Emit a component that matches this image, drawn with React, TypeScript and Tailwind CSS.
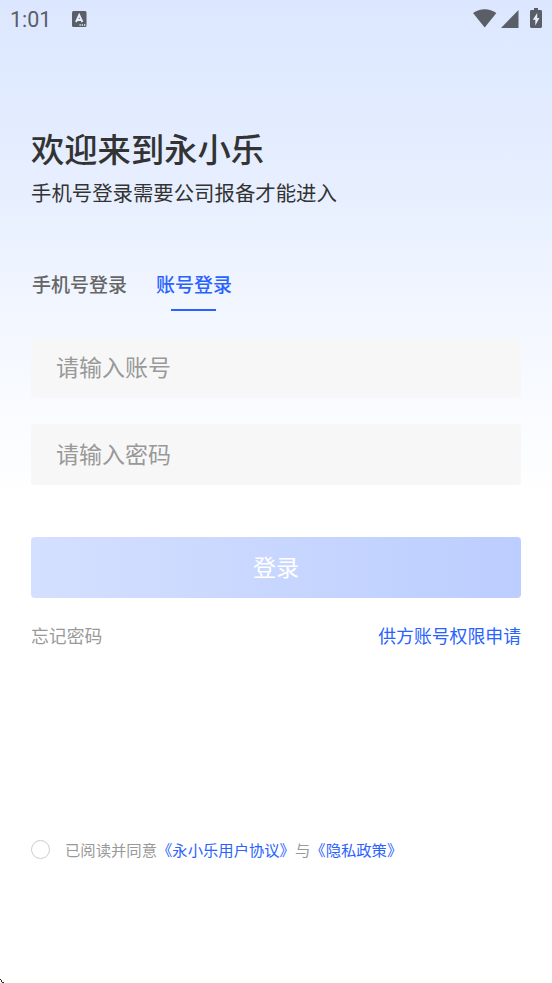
import React, { useState } from 'react';

type LoginMode = 'phone' | 'account';

const TABS: { id: LoginMode; label: string }[] = [
  { id: 'phone', label: '手机号登录' },
  { id: 'account', label: '账号登录' },
];

function StatusBar() {
  return (
    <header className="flex h-[38px] items-center pl-[10px] text-[#5a5e66]">
      <span className="w-[62px] pt-[2px] font-['Roboto',sans-serif] text-[21.5px] leading-[36px]">1:01</span>
      <svg width="15" height="16" viewBox="0 0 15 16" className="-mt-px">
        <rect x="0" y="0" width="14.5" height="16" rx="1.5" fill="currentColor" />
        <path d="M4 11 7.2 4 10.4 11M5.2 9H9.3" fill="none" stroke="#e6eeff" strokeWidth="1.9" />
        <path d="M7.5 14h1.3M9.7 14H11M12 14h1.3" stroke="#e6eeff" strokeWidth="1.3" />
      </svg>
      <div className="ml-auto flex items-center pr-[10px]">
        <svg width="24" height="19" viewBox="0 0 24 19" fill="currentColor" className="-mt-px">
          <path d="M0 4.1C6.8-1.1 16.6-1.1 23.4 4.1L11.7 18.5Z" />
        </svg>
        <svg width="18" height="18" viewBox="0 0 18 18" fill="currentColor" className="-mt-px ml-[4px]">
          <path d="M0 18 17.5 0V18Z" />
        </svg>
        <svg width="12" height="20" viewBox="0 0 12 20" fill="currentColor" className="-mt-[2px] ml-[11px]">
          <path d="M4 0h4v2h2.6Q12 2 12 3.4v15.2Q12 20 10.6 20H1.4Q0 20 0 18.6V3.4Q0 2 1.4 2H4Z" />
          <path d="M7.2 5 2.8 11.8H5.3V17.5L9.4 10.1H7.2Z" fill="#e6eeff" />
        </svg>
      </div>
    </header>
  );
}

export default function App() {
  const [mode, setMode] = useState<LoginMode>('account');
  const [agreed, setAgreed] = useState(false);

  return (
    <div className="relative h-[983px] w-[552px] overflow-hidden bg-[linear-gradient(180deg,#dce7ff_0px,#e7efff_190px,#f3f7ff_325px,#ffffff_500px)] font-['Noto_Sans_CJK_SC',sans-serif]">
      <StatusBar />

      <main className="px-[31px] pt-[86px]">
        <h1 className="h-[48px] text-[33.3px] leading-[48px] font-medium text-[#333333]">欢迎来到永小乐</h1>
        <p className="mt-[5px] h-[30px] text-[20.4px] leading-[30px] text-[#333333]">
          手机号登录需要公司报备才能进入
        </p>

        {/* Login mode tabs */}
        <div className="mt-[63px] flex h-[41px] gap-[29px] pl-px">
          {TABS.map((tab) => (
            <button
              key={tab.id}
              type="button"
              onClick={() => setMode(tab.id)}
              className={`flex flex-col items-center text-[19px] leading-[28px] font-medium ${
                mode === tab.id ? 'text-[#2962ff]' : 'text-[#666666]'
              }`}
            >
              {tab.label}
              {mode === tab.id && <span className="mt-[11px] mr-px h-[2px] w-[45px] bg-[#2962ff]" />}
            </button>
          ))}
        </div>

        <form onSubmit={(e) => e.preventDefault()} className="pt-[27px]">
          <input
            type="text"
            placeholder="请输入账号"
            className="block h-[60px] w-full rounded-[4px] bg-[#f7f7f7] px-[25px] pb-[4px] text-[23px] placeholder-[#999999] outline-none"
          />
          <input
            type="password"
            placeholder="请输入密码"
            className="mt-[26px] block h-[61px] w-full rounded-[4px] bg-[#f7f7f7] px-[25px] pb-[3px] text-[23px] placeholder-[#999999] outline-none"
          />
          <button
            type="submit"
            className="mt-[52px] block h-[61px] w-full rounded-[4px] bg-linear-to-r from-[#d4e0ff] to-[#bccdff] pb-[2px] text-[23px] text-white"
          >
            登录
          </button>
        </form>

        <div className="mt-[23px] flex justify-between text-[17.85px] leading-[28px]">
          <a className="text-[#999999]">忘记密码</a>
          <a className="text-[#2962ff]">供方账号权限申请</a>
        </div>

        {/* User agreement */}
        <div className="mt-[188px] flex h-[24px] items-center">
          <button
            type="button"
            role="checkbox"
            aria-checked={agreed}
            onClick={() => setAgreed(!agreed)}
            className={`mt-px h-[19px] w-[19px] rounded-full border border-[#cccccc] ${agreed ? 'bg-[#2962ff]' : 'bg-white'}`}
          />
          <p className="ml-[15px] text-[15.34px] leading-[24px] whitespace-nowrap text-[#999999]">
            已阅读并同意<a className="text-[#2962ff]">《永小乐用户协议》</a>与
            <a className="text-[#2962ff]">《隐私政策》</a>
          </p>
        </div>
      </main>

      {/* Tip of the pointer at the screen corner */}
      <svg width="4" height="4" viewBox="0 0 4 4" className="absolute bottom-0 left-0" shapeRendering="crispEdges">
        <path d="M0 0h1v1H0zM1 1h1v1H1zM1 2h1v1H1zM2 3h2v1H2z" fill="#222222" />
      </svg>
    </div>
  );
}
